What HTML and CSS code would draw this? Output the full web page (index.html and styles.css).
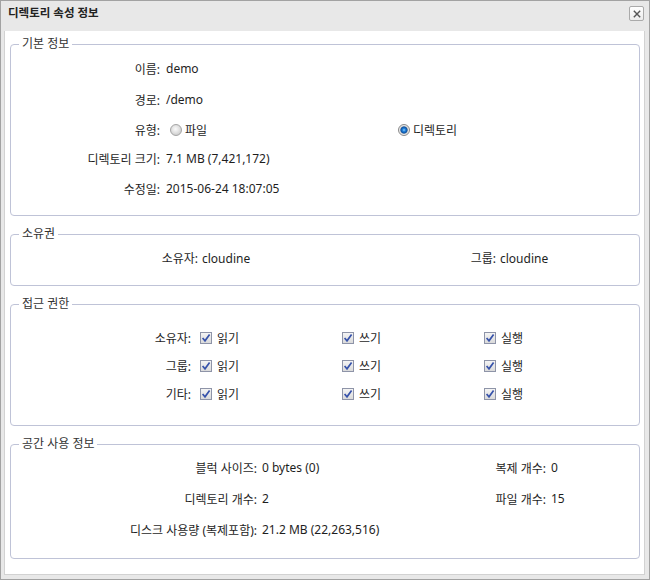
FILE: index.html
```html
<!DOCTYPE html>
<html lang="ko">
<head>
<meta charset="utf-8">
<title>디렉토리 속성 정보</title>
<link rel="stylesheet" href="styles.css">
</head>
<body>
<div class="window">
  <div class="titlebar">
    <span class="title">디렉토리 속성 정보</span>
    <button class="close" type="button" aria-label="닫기">
      <svg width="8" height="8" viewBox="0 0 8 8"><path d="M0.8 0.8 L7.2 7.2 M7.2 0.8 L0.8 7.2" stroke="#555" stroke-width="1.4" fill="none"/></svg>
    </button>
  </div>
  <div class="panel">
    <fieldset class="group">
      <legend>기본 정보</legend>
      <div class="grid basic-grid">
        <span class="label">이름:</span><span class="value">demo</span>
        <span class="label">경로:</span><span class="value">/demo</span>
        <span class="label">유형:</span>
        <span class="value options">
          <span class="opt"><span class="radio"></span>파일</span>
          <span class="opt"><span class="radio checked"></span>디렉토리</span>
        </span>
        <span class="label">디렉토리 크기:</span><span class="value">7.1 MB (7,421,172)</span>
        <span class="label">수정일:</span><span class="value">2015-06-24 18:07:05</span>
      </div>
    </fieldset>

    <fieldset class="group">
      <legend>소유권</legend>
      <div class="grid owner-grid">
        <span class="label">소유자:</span><span class="value">cloudine</span>
        <span class="label">그룹:</span><span class="value">cloudine</span>
      </div>
    </fieldset>

    <fieldset class="group perm">
      <legend>접근 권한</legend>
      <div class="grid perm-grid">
        <span class="label">소유자:</span>
        <span class="cb"><span class="box"><svg width="10" height="10" viewBox="0 0 10 10"><path d="M1.6 5 L4 7.8 L8.6 1.6" stroke="#3652aa" stroke-width="1.7" fill="none"/></svg></span>읽기</span>
        <span class="cb"><span class="box"><svg width="10" height="10" viewBox="0 0 10 10"><path d="M1.6 5 L4 7.8 L8.6 1.6" stroke="#3652aa" stroke-width="1.7" fill="none"/></svg></span>쓰기</span>
        <span class="cb"><span class="box"><svg width="10" height="10" viewBox="0 0 10 10"><path d="M1.6 5 L4 7.8 L8.6 1.6" stroke="#3652aa" stroke-width="1.7" fill="none"/></svg></span>실행</span>
        <span class="label">그룹:</span>
        <span class="cb"><span class="box"><svg width="10" height="10" viewBox="0 0 10 10"><path d="M1.6 5 L4 7.8 L8.6 1.6" stroke="#3652aa" stroke-width="1.7" fill="none"/></svg></span>읽기</span>
        <span class="cb"><span class="box"><svg width="10" height="10" viewBox="0 0 10 10"><path d="M1.6 5 L4 7.8 L8.6 1.6" stroke="#3652aa" stroke-width="1.7" fill="none"/></svg></span>쓰기</span>
        <span class="cb"><span class="box"><svg width="10" height="10" viewBox="0 0 10 10"><path d="M1.6 5 L4 7.8 L8.6 1.6" stroke="#3652aa" stroke-width="1.7" fill="none"/></svg></span>실행</span>
        <span class="label">기타:</span>
        <span class="cb"><span class="box"><svg width="10" height="10" viewBox="0 0 10 10"><path d="M1.6 5 L4 7.8 L8.6 1.6" stroke="#3652aa" stroke-width="1.7" fill="none"/></svg></span>읽기</span>
        <span class="cb"><span class="box"><svg width="10" height="10" viewBox="0 0 10 10"><path d="M1.6 5 L4 7.8 L8.6 1.6" stroke="#3652aa" stroke-width="1.7" fill="none"/></svg></span>쓰기</span>
        <span class="cb"><span class="box"><svg width="10" height="10" viewBox="0 0 10 10"><path d="M1.6 5 L4 7.8 L8.6 1.6" stroke="#3652aa" stroke-width="1.7" fill="none"/></svg></span>실행</span>
      </div>
    </fieldset>

    <fieldset class="group space">
      <legend>공간 사용 정보</legend>
      <div class="grid space-grid">
        <span class="label">블럭 사이즈:</span><span class="value">0 bytes (0)</span>
        <span class="label">복제 개수:</span><span class="value">0</span>
        <span class="label">디렉토리 개수:</span><span class="value">2</span>
        <span class="label">파일 개수:</span><span class="value">15</span>
        <span class="label">디스크 사용량 (복제포함):</span><span class="value">21.2 MB (22,263,516)</span>
        <span></span><span></span>
      </div>
    </fieldset>
  </div>
</div>
</body>
</html>
```
FILE: styles.css
```css
body {
  margin: 0;
  font-family: "Noto Sans", "Noto Sans CJK KR", sans-serif;
  font-size: 12px;
  color: #1e1e1e;
}

.window {
  width: 650px;
  height: 580px;
  box-sizing: border-box;
  border: 1px solid #a2a2a2;
  background: #e8e8e8;
  display: flex;
  flex-direction: column;
}

.titlebar {
  height: 30px;
  flex: none;
  box-sizing: border-box;
  padding: 4px 5px 0 7px;
  display: flex;
  justify-content: space-between;
  align-items: flex-start;
}

.title {
  font-weight: bold;
  font-size: 11.5px;
  line-height: 16px;
  color: #222;
}

.close {
  width: 15px;
  height: 15px;
  margin-top: 1px;
  padding: 0;
  box-sizing: border-box;
  border: 1px solid #aaaaaa;
  border-radius: 2px;
  background: linear-gradient(#ffffff, #ebebeb);
  display: flex;
  align-items: center;
  justify-content: center;
}

.close svg {
  display: block;
}

.panel {
  flex: 1;
  margin: 0 4px 4px 3px;
  background: #fff;
  border: 1px solid #d2d2d2;
  border-top: 0;
  padding: 5px 4px 0 5px;
  display: flex;
  flex-direction: column;
  gap: 10px;
}

.group {
  margin: 0;
  padding: 0 0 11px;
  border: 1px solid #bfc3d7;
  border-radius: 4px;
  min-width: 0;
}

.group legend {
  margin-left: 8px;
  padding: 0 3px;
  line-height: 16px;
  color: #333;
}

.grid {
  display: grid;
  align-items: center;
}

.label {
  text-align: right;
  white-space: nowrap;
}

.value {
  white-space: nowrap;
}

.basic-grid {
  margin-top: 1px;
  grid-template-columns: 149px 1fr;
  grid-template-rows: 31px 31px 29px 29px 31px;
}

.basic-grid .value {
  padding-left: 6px;
}

.options {
  display: flex;
  align-items: center;
}

.opt {
  display: flex;
  align-items: center;
}

.opt:first-child {
  width: 228px;
}

.radio {
  width: 12px;
  height: 12px;
  box-sizing: border-box;
  border-radius: 50%;
  margin: 0 3px 0 4px;
  border: 1px solid #a4a4a4;
  background: radial-gradient(circle at 45% 40%, #fafafa 0, #e6e6e6 3px, #cfcfcf 6px);
}

.radio.checked {
  border-color: #8a8a8a;
  background: radial-gradient(circle at 50% 50%, #8fd0ff 0, #1f7ed6 1.6px, #0d4f9e 3.2px, #c8c8c8 3.9px, #ededed 4.6px, #d6d6d6 6px);
}

.owner-grid {
  grid-template-columns: 187px 190px 108px 1fr;
  grid-template-rows: 32px;
}

.owner-grid .value {
  padding-left: 4px;
}

.perm {
  padding: 12px 0 17px;
}

.perm-grid {
  grid-template-columns: 180px 142px 142px 1fr;
  grid-template-rows: 28px 28px 28px;
}

.cb {
  display: flex;
  align-items: center;
  padding-left: 9px;
}

.box {
  width: 12px;
  height: 12px;
  box-sizing: border-box;
  border: 1px solid #8e94a8;
  background: linear-gradient(#f4f4f4, #dadada);
  margin-right: 5px;
  display: flex;
  align-items: center;
  justify-content: center;
}

.box svg {
  display: block;
}

.space {
  padding-bottom: 13px;
}

.space-grid {
  grid-template-columns: 246px 180px 109px 1fr;
  grid-template-rows: 31px 31px 31px;
}

.space-grid .value {
  padding-left: 5px;
}
```
